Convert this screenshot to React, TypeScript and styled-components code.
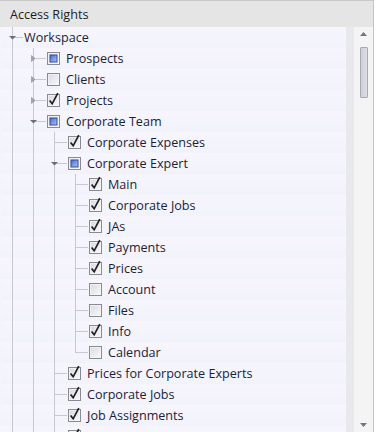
import React from 'react'
import styled, { createGlobalStyle } from 'styled-components'

const GlobalStyle = createGlobalStyle`
  html, body {
    margin: 0;
    padding: 0;
    background: #ffffff;
  }
  body {
    font-family: 'Open Sans', 'Noto Sans', 'Liberation Sans', sans-serif;
  }
`

const LINE = '#c8c8cf'

type CheckState = 'on' | 'off' | 'mixed' | 'none'
type Expand = 'open' | 'closed' | undefined

type TreeNode = {
  label: string
  check: CheckState
  expand?: Expand
  children?: TreeNode[]
}

type GuideKind = 'blank' | 'line' | 'tee' | 'end'

type FlatRow = {
  label: string
  check: CheckState
  expand?: Expand
  guides: GuideKind[]
  connector: GuideKind
}

const tree: TreeNode[] = [
  {
    label: 'Workspace',
    check: 'none',
    expand: 'open',
    children: [
      { label: 'Prospects', check: 'mixed', expand: 'closed' },
      { label: 'Clients', check: 'off', expand: 'closed' },
      { label: 'Projects', check: 'on', expand: 'closed' },
      {
        label: 'Corporate Team',
        check: 'mixed',
        expand: 'open',
        children: [
          { label: 'Corporate Expenses', check: 'on' },
          {
            label: 'Corporate Expert',
            check: 'mixed',
            expand: 'open',
            children: [
              { label: 'Main', check: 'on' },
              { label: 'Corporate Jobs', check: 'on' },
              { label: 'JAs', check: 'on' },
              { label: 'Payments', check: 'on' },
              { label: 'Prices', check: 'on' },
              { label: 'Account', check: 'off' },
              { label: 'Files', check: 'off' },
              { label: 'Info', check: 'on' },
              { label: 'Calendar', check: 'off' }
            ]
          },
          { label: 'Prices for Corporate Experts', check: 'on' },
          { label: 'Corporate Jobs', check: 'on' },
          { label: 'Job Assignments', check: 'on' },
          { label: 'Invoices', check: 'on' },
          { label: 'Reports', check: 'on' }
        ]
      },
      { label: 'Settings', check: 'off', expand: 'closed' }
    ]
  },
  { label: 'Archive', check: 'none', expand: 'closed' }
]

const flatten = (nodes: TreeNode[], guides: boolean[] = []): FlatRow[] =>
  nodes.flatMap((node, i) => {
    const isLast = i === nodes.length - 1
    const row: FlatRow = {
      label: node.label,
      check: node.check,
      expand: node.expand,
      guides: guides.map((g) => (g ? 'line' : 'blank')),
      connector: isLast ? 'end' : 'tee'
    }
    const kids =
      node.expand === 'open' && node.children ? flatten(node.children, [...guides, !isLast]) : []
    return [row, ...kids]
  })

const rows = flatten(tree)

const vLine = (h: string) => `linear-gradient(${LINE}, ${LINE}) 10px 0 / 1px ${h} no-repeat`
const hLine = `linear-gradient(${LINE}, ${LINE}) 10px 10px / 100% 1px no-repeat`

const guideBackground = (kind: GuideKind) => {
  switch (kind) {
    case 'line':
      return vLine('100%')
    case 'tee':
      return `${hLine}, ${vLine('100%')}`
    case 'end':
      return `${hLine}, ${vLine('11px')}`
    default:
      return 'none'
  }
}

const Panel = styled.div`
  width: 374px;
  height: 432px;
  box-sizing: border-box;
  border-top: 1px solid #c9c9c9;
  border-right: 1px solid #c4c4c4;
  display: flex;
  flex-direction: column;
  overflow: hidden;
`

const Header = styled.div`
  flex: none;
  height: 26px;
  padding-left: 10px;
  display: flex;
  align-items: center;
  background: #e5e5e6;
  color: #1c1c24;
  font-size: 12.6px;
`

const Body = styled.div`
  flex: 1;
  display: flex;
  min-height: 0;
`

const List = styled.div`
  flex: 1;
  padding-left: 2px;
  overflow: hidden;
  background: #f5f4fb;
`

const Row = styled.div`
  height: 21px;
  display: flex;
  align-items: center;
  background: linear-gradient(#f7f5fe, #f2f3fa);
  color: #1d1c3a;
  font-size: 12.6px;
  white-space: nowrap;
`

const Guide = styled.span<{ $kind: GuideKind; $wide?: boolean }>`
  flex: none;
  width: ${(p) => (p.$wide ? '23px' : '21px')};
  height: 21px;
  display: flex;
  align-items: center;
  background: ${(p) => guideBackground(p.$kind)};
`

const ExpanderIcon = styled.svg`
  flex: none;
  margin-left: 7px;
  overflow: visible;
`

const Box = styled.svg`
  flex: none;
  margin: 0 6px 0 1px;
  overflow: visible;
`

const Label = styled.span<{ $plain?: boolean }>`
  margin-left: ${(p) => (p.$plain ? '1px' : '0')};
`

const Gutter = styled.div`
  flex: none;
  width: 8px;
  background: #e8e8ed;
`

const ScrollBar = styled.div`
  flex: none;
  width: 19px;
  display: flex;
  flex-direction: column;
  align-items: center;
  background: #f4f4f5;
`

const Arrow = styled.div`
  flex: none;
  height: 14px;
  display: flex;
  align-items: center;
  justify-content: center;
`

const Track = styled.div`
  flex: 1;
  display: flex;
  flex-direction: column;
  align-items: center;
`

const Thumb = styled.div`
  margin-top: 6px;
  width: 6px;
  height: 49px;
  border: 1px solid #a9a9b5;
  border-radius: 1px;
  background: linear-gradient(90deg, #cfcfd8, #dcdce3);
`

const Expander = ({ state }: { state: Expand }) =>
  state === 'open' ? (
    <ExpanderIcon width='7' height='4' viewBox='0 0 7 4'>
      <polygon points='0,0 7,0 3.5,3.5' fill='#6e6e74' />
    </ExpanderIcon>
  ) : (
    <ExpanderIcon width='7' height='7' viewBox='0 0 7 7'>
      <polygon points='1.5,0.5 5,3.5 1.5,6.5' fill='#a4a4aa' stroke='#8c8c94' strokeWidth='0.6' />
    </ExpanderIcon>
  )

const CheckBox = ({ state }: { state: CheckState }) => (
  <Box width='13' height='13' viewBox='0 0 13 13'>
    <defs>
      <linearGradient id='boxFill' x1='0' y1='0' x2='1' y2='1'>
        <stop offset='0' stopColor='#d9d9dd' />
        <stop offset='1' stopColor='#fbfbfc' />
      </linearGradient>
      <linearGradient id='mixFill' x1='0' y1='0' x2='1' y2='1'>
        <stop offset='0' stopColor='#3e62cc' />
        <stop offset='0.5' stopColor='#7d98e6' />
        <stop offset='1' stopColor='#aabcf2' />
      </linearGradient>
    </defs>
    <rect x='0.5' y='0.5' width='12' height='12' fill='url(#boxFill)' stroke='#8a8a92' />
    <rect x='1.5' y='1.5' width='10' height='10' fill='none' stroke='#f6f6f8' strokeOpacity='0.7' />
    {state === 'mixed' && (
      <rect x='3' y='3' width='7' height='7' fill='url(#mixFill)' stroke='#34529f' />
    )}
    {state === 'on' && (
      <path
        d='M2.6 6.4 L5.2 9.8 L10.8 -0.8'
        fill='none'
        stroke='#1f1f24'
        strokeWidth='1.7'
        strokeLinejoin='miter'
      />
    )}
  </Box>
)

const TreeRow = ({ row }: { row: FlatRow }) => {
  const hasBox = row.check !== 'none'
  return (
    <Row>
      {row.guides.map((g, i) => (
        <Guide key={i} $kind={g} />
      ))}
      <Guide $kind={row.connector} $wide={hasBox}>
        {row.expand && <Expander state={row.expand} />}
      </Guide>
      {hasBox && <CheckBox state={row.check} />}
      <Label $plain={!hasBox}>{row.label}</Label>
    </Row>
  )
}

const App = () => (
  <>
    <GlobalStyle />
    <Panel>
      <Header>Access Rights</Header>
      <Body>
        <List>
          {rows.map((row, i) => (
            <TreeRow key={i} row={row} />
          ))}
        </List>
        <Gutter />
        <ScrollBar>
          <Arrow>
            <svg width='7' height='4' viewBox='0 0 7 4'>
              <polygon points='0,4 7,4 3.5,0' fill='#74747c' />
            </svg>
          </Arrow>
          <Track>
            <Thumb />
          </Track>
          <Arrow>
            <svg width='7' height='4' viewBox='0 0 7 4'>
              <polygon points='0,0 7,0 3.5,4' fill='#74747c' />
            </svg>
          </Arrow>
        </ScrollBar>
      </Body>
    </Panel>
  </>
)

export default App
